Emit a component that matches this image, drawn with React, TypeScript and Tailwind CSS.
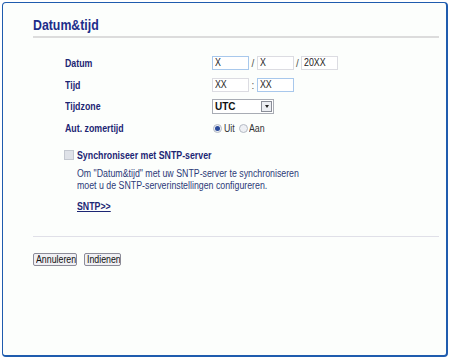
import React from "react";

const font = { fontFamily: '"Liberation Sans", Arial, sans-serif' };

function T({ children, className = "" }: { children: React.ReactNode; className?: string }) {
  return <span className={"inline-block origin-left scale-x-[0.88] whitespace-nowrap " + className}>{children}</span>;
}

function Field({ value, focus = false }: { value: string; focus?: boolean }) {
  return (
    <div
      className={
        focus
          ? "w-[37px] h-[14px] border border-[#a8c8ec] bg-white text-[10px] leading-[12px] font-normal text-[#222] pl-[2px] overflow-hidden"
          : "w-[37px] h-[14px] border border-[#dcdce2] bg-white text-[10px] leading-[12px] font-normal text-[#222] pl-[2px] overflow-hidden"
      }
    >
      <T>{value}</T>
    </div>
  );
}

function Radio({ checked }: { checked: boolean }) {
  return (
    <div className="w-[9px] h-[9px] rounded-full border border-[#b4bac4] bg-[#eef0f4] flex items-center justify-center">
      {checked && <div className="w-[5px] h-[5px] rounded-full bg-[#2a4a9a]" />}
    </div>
  );
}

export default function App() {
  return (
    <div className="w-[450px] h-[361px] bg-white p-[2px]" style={font}>
      <div className="w-[446px] h-[355px] border border-[#1f5cae] border-r-2 border-b-2 rounded-[4px] bg-[#fcfefc] pl-[30px] pr-[7px] pt-[13px]">
        <div className="text-[14px] font-bold text-[#1c2d8a] leading-[18px]">
          <T>Datum&amp;tijd</T>
        </div>
        <div className="h-[2px] bg-[#dcdcdc] mt-[2px]" />

        <div className="pl-[32px] mt-[18px] text-[10px] font-bold text-[#1c2674]">
          <div className="flex items-center h-[14px]">
            <div className="w-[147px]"><T>Datum</T></div>
            <Field value="X" focus />
            <span className="w-[8px] text-center font-normal text-[#555]">/</span>
            <Field value="X" />
            <span className="w-[7px] text-center font-normal text-[#555]">/</span>
            <Field value="20XX" />
          </div>
          <div className="flex items-center h-[14px] mt-[8px]">
            <div className="w-[147px]"><T>Tijd</T></div>
            <Field value="XX" />
            <span className="w-[8px] text-center font-normal text-[#555]">:</span>
            <Field value="XX" focus />
          </div>
          <div className="flex items-center h-[15px] mt-[7px]">
            <div className="w-[147px]"><T>Tijdzone</T></div>
            <div className="w-[62px] h-[15px] border border-[#a8acb4] bg-white flex items-center justify-between">
              <span className="pl-[2px] text-[10px] font-bold text-[#111]">UTC</span>
              <div className="w-[11px] h-[11px] border border-[#8a8e98] bg-[#eceef2] mr-[1px] flex items-center justify-center">
                <div className="w-0 h-0 border-l-[2.5px] border-r-[2.5px] border-t-[3px] border-l-transparent border-r-transparent border-t-[#222]" />
              </div>
            </div>
          </div>
          <div className="flex items-center h-[14px] mt-[7px]">
            <div className="w-[147px]"><T>Aut. zomertijd</T></div>
            <div className="flex items-center font-normal text-[10px] text-[#333]">
              <div className="ml-[1px]"><Radio checked /></div>
              <div className="ml-[2px] w-[15px]"><T>Uit</T></div>
              <Radio checked={false} />
              <div className="ml-[1px]"><T>Aan</T></div>
            </div>
          </div>
        </div>

        <div className="pl-[31px] mt-[13px]">
          <div className="flex items-center h-[14px]">
            <div className="w-[10px] h-[10px] border border-[#c4c8d0] bg-[#dfe2e8]" />
            <div className="ml-[3px] text-[10px] font-bold text-[#1c2674]">
              <T>Synchroniseer met SNTP-server</T>
            </div>
          </div>
          <div className="pl-[13px] mt-[6px] text-[10px] leading-[12px] text-[#2c3a78]">
            <div><T>Om "Datum&amp;tijd" met uw SNTP-server te synchroniseren</T></div>
            <div><T>moet u de SNTP-serverinstellingen configureren.</T></div>
            <div className="mt-[9px] font-bold underline text-[#1c2674]">
              <T className="underline">SNTP&gt;&gt;</T>
            </div>
          </div>
        </div>

        <div className="h-[1px] bg-[#e0e0e8] mt-[23px]" />

        <div className="flex gap-[7px] mt-[16px]">
          <button className="w-[44px] h-[13px] border border-[#8c8c98] rounded-[2px] bg-[#f0f0f4] text-[10px] leading-[10px] text-[#111] text-left pl-[2px] overflow-hidden">
            <T>Annuleren</T>
          </button>
          <button className="w-[37px] h-[13px] border border-[#8c8c98] rounded-[2px] bg-[#f0f0f4] text-[10px] leading-[10px] text-[#111] text-left pl-[2px] overflow-hidden">
            <T>Indienen</T>
          </button>
        </div>
      </div>
    </div>
  );
}
